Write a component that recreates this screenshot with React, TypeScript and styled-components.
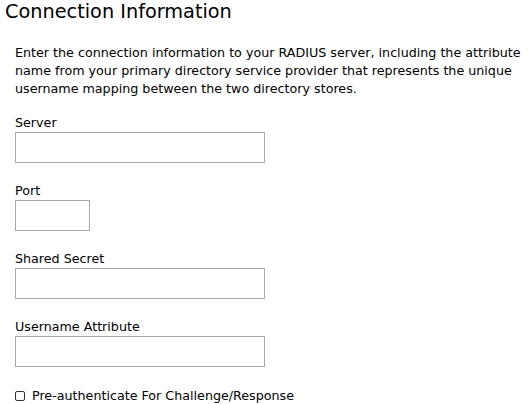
import React from 'react';
import styled, { createGlobalStyle } from 'styled-components';

const GlobalStyle = createGlobalStyle`
  html, body {
    margin: 0;
    padding: 0;
    background: #ffffff;
  }
  body {
    font-family: 'DejaVu Sans', Verdana, sans-serif;
    color: #000000;
  }
`;

const Page = styled.div`
  width: 530px;
  padding: 0 0 0 5px;
  box-sizing: border-box;
  overflow: hidden;
`;

const Title = styled.h1`
  margin: 0;
  font-size: 19.3px;
  line-height: 24px;
  font-weight: normal;
`;

const Body = styled.div`
  padding-left: 10px;
  display: flex;
  flex-direction: column;
`;

const Intro = styled.p`
  margin: 20px 0 17px;
  width: 515px;
  font-size: 12.7px;
  line-height: 18px;
`;

const Field = styled.div`
  display: flex;
  flex-direction: column;
  gap: 1px;
  margin-bottom: 20px;
`;

const Label = styled.label`
  font-size: 12.7px;
  line-height: 16px;
`;

const TextInput = styled.input<{ $width: number }>`
  width: ${({ $width }) => $width}px;
  height: 31px;
  box-sizing: border-box;
  border: 1px solid #a9a9a9;
  border-radius: 0;
  margin: 0;
  padding: 2px 4px;
  font-family: inherit;
  font-size: 13px;
  outline: none;
`;

const CheckRow = styled.label`
  display: flex;
  align-items: center;
  gap: 7px;
  font-size: 12.7px;
  line-height: 16px;
  margin-top: 1px;
`;

const Box = styled.span`
  width: 8px;
  height: 8px;
  border: 1px solid #333;
  border-radius: 2px;
  flex: none;
`;

const fields = [
  { label: 'Server', width: 250 },
  { label: 'Port', width: 75 },
  { label: 'Shared Secret', width: 250 },
  { label: 'Username Attribute', width: 250 },
];

export default function App() {
  return (
    <Page>
      <GlobalStyle />
      <Title>Connection Information</Title>
      <Body>
        <Intro>
          Enter the connection information to your RADIUS server, including the attribute name from
          your primary directory service provider that represents the unique username mapping
          between the two directory stores.
        </Intro>
        {fields.map((f) => (
          <Field key={f.label}>
            <Label>{f.label}</Label>
            <TextInput type="text" $width={f.width} />
          </Field>
        ))}
        <CheckRow>
          <Box />
          Pre-authenticate For Challenge/Response
        </CheckRow>
      </Body>
    </Page>
  );
}
